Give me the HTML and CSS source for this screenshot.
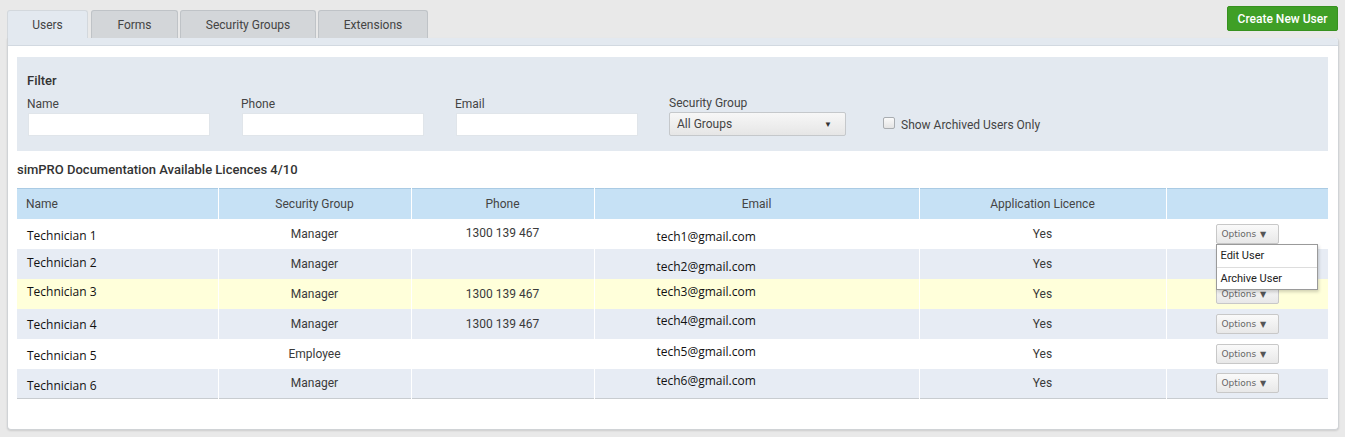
FILE: index.html
```html
<!DOCTYPE html>
<html>
<head>
<meta charset="utf-8">
<link rel="stylesheet" href="styles.css">
</head>
<body>
<div class="top">
  <div class="tabs">
    <div class="tab active">Users</div>
    <div class="tab t-forms">Forms</div>
    <div class="tab t-sec">Security Groups</div>
    <div class="tab t-ext">Extensions</div>
  </div>
  <button class="btn-create">Create New User</button>
</div>
<div class="panel">
  <div class="panel-strip"></div>
  <div class="panel-body">
    <div class="filter">
      <div class="filter-title">Filter</div>
      <div class="filter-row">
        <div class="field"><label>Name</label><div class="input"></div></div>
        <div class="field"><label>Phone</label><div class="input"></div></div>
        <div class="field"><label>Email</label><div class="input"></div></div>
        <div class="field f-sel"><label>Security Group</label><div class="select"><span>All Groups</span><span class="arr">▼</span></div></div>
        <div class="check"><span class="box"></span><span>Show Archived Users Only</span></div>
      </div>
    </div>
    <div class="heading">simPRO Documentation Available Licences 4/10</div>
    <table class="users">
      <colgroup>
        <col class="c1"><col class="c2"><col class="c3"><col class="c4"><col class="c5"><col>
      </colgroup>
      <thead>
        <tr><th class="left">Name</th><th>Security Group</th><th>Phone</th><th>Email</th><th>Application Licence</th><th></th></tr>
      </thead>
      <tbody>
        <tr><td class="name lo">Technician 1</td><td>Manager</td><td class="hi1">1300 139 467</td><td class="email lo2">tech1@gmail.com</td><td>Yes</td><td class="opt"><span class="options">Options <i>▼</i></span>
          <div class="menu"><div class="mi">Edit User</div><div class="mi">Archive User</div></div></td></tr>
        <tr class="alt"><td class="name hi1">Technician 2</td><td>Manager</td><td></td><td class="email lo2">tech2@gmail.com</td><td>Yes</td><td class="opt"></td></tr>
        <tr class="hover"><td class="name hi">Technician 3</td><td>Manager</td><td>1300 139 467</td><td class="email hi">tech3@gmail.com</td><td>Yes</td><td class="opt"><span class="options">Options <i>▼</i></span></td></tr>
        <tr class="alt"><td class="name lo1">Technician 4</td><td>Manager</td><td>1300 139 467</td><td class="email hi2">tech4@gmail.com</td><td>Yes</td><td class="opt"><span class="options">Options <i>▼</i></span></td></tr>
        <tr><td class="name lo">Technician 5</td><td>Employee</td><td></td><td class="email hi">tech5@gmail.com</td><td>Yes</td><td class="opt"><span class="options">Options <i>▼</i></span></td></tr>
        <tr class="alt"><td class="name lo">Technician 6</td><td>Manager</td><td></td><td class="email hi2">tech6@gmail.com</td><td>Yes</td><td class="opt"><span class="options">Options <i>▼</i></span></td></tr>
      </tbody>
    </table>
  </div>
</div>
</body>
</html>
```

FILE: styles.css
```css
* { box-sizing: border-box; }
body {
  margin: 0;
  background: #e9e9e9;
  font-family: Roboto, "Liberation Sans", sans-serif;
  color: #333;
  width: 1345px;
  height: 437px;
  overflow: hidden;
}
.top {
  display: flex;
  justify-content: space-between;
  align-items: flex-start;
  height: 38px;
  padding: 0 7px 0 7px;
}
.tabs {
  display: flex;
  gap: 2px;
  margin-top: 10px;
}
.tab {
  height: 28px;
  line-height: 29px;
  font-size: 12px;
  color: #444;
  text-align: center;
  background: #d3d6d9;
  border: 1px solid #bfc3c7;
  border-bottom: none;
  border-radius: 3px 3px 0 0;
}
.tab.active { width: 81px; background: #e3e9f0; border-color: #d3d8dd; margin-right: 1px; }
.t-forms { width: 87px; }
.t-sec { width: 136px; }
.t-ext { width: 110px; }
.btn-create {
  margin-top: 6px;
  width: 111px;
  height: 25px;
  background: #3f9f26;
  border: 1px solid #37911f;
  border-radius: 2px;
  color: #fff;
  font-family: Roboto, sans-serif;
  font-size: 12px;
  font-weight: 500;
  padding: 0;
}
.panel {
  margin: 0 6px 0 7px;
  height: 392px;
  background: #fff;
  border: 1px solid #d0d3d6;
  border-top: none;
  border-radius: 0 4px 4px 4px;
  box-shadow: 0 1px 2px rgba(0,0,0,0.12);
}
.panel-strip {
  height: 8px;
  background: #e3e9f0;
  border-bottom: 1px solid #d2d9e1;
  border-radius: 0 4px 0 0;
}
.panel-body {
  padding: 11px 10px 0 9px;
}
.filter {
  background: #e3e9f0;
  height: 94px;
  padding: 16px 10px 0 10px;
}
.filter-title {
  font-size: 13px;
  font-weight: 500;
  color: #333;
  line-height: 16px;
}
.filter-row {
  display: flex;
  align-items: flex-end;
  margin-top: 7px;
}
.field {
  display: flex;
  flex-direction: column;
  width: 183px;
  margin-right: 31px;
}
.field label {
  font-size: 12px;
  color: #444;
  line-height: 14px;
  margin-bottom: 2px;
}
.input {
  height: 23px;
  background: #fff;
  border: 1px solid #e0e5ea;
  margin-left: 1px;
}
.f-sel { width: 177px; margin-right: 37px; }
.select {
  height: 24px;
  border: 1px solid #c5c8cb;
  border-radius: 2px;
  background: linear-gradient(#f7f7f7, #e6e6e6);
  display: flex;
  justify-content: space-between;
  align-items: center;
  padding: 0 13px 0 7px;
  font-size: 12px;
  color: #444;
}
.select .arr { font-size: 8px; color: #333; }
.check {
  display: flex;
  align-items: center;
  gap: 6px;
  font-size: 12px;
  color: #444;
  height: 23px;
}
.check .box {
  width: 12px;
  height: 12px;
  border: 1px solid #a9adb1;
  border-radius: 2px;
  background: linear-gradient(#fafafa, #e4e4e4);
  margin-top: -3px;
}
.check span:last-child { margin-top: 1px; }
.heading {
  font-size: 13px;
  font-weight: 500;
  color: #333;
  height: 37px;
  line-height: 15px;
  padding-top: 11px;
}
.users {
  width: 1311px;
  border-collapse: collapse;
  table-layout: fixed;
  border-top: 1px solid #aacbe4;
  border-bottom: 1px solid #c8ccd0;
}
.c1 { width: 201px; }
.c2 { width: 193px; }
.c3 { width: 183px; }
.c4 { width: 325px; }
.c5 { width: 247px; }
.users th {
  height: 30px;
  background: #c6e1f5;
  font-size: 12px;
  font-weight: 400;
  color: #444;
  text-align: center;
  border-left: 1px solid #fff;
  padding: 0;
}
.users th:first-child { border-left: none; }
.users th.left { text-align: left; padding-left: 9px; }
.users td {
  height: 30px;
  font-size: 12px;
  color: #3a3a3a;
  text-align: center;
  border-left: 1px solid #fff;
  padding: 0;
  vertical-align: middle;
}
.users td:first-child { border-left: none; }
.users td.name {
  text-align: left;
  padding-left: 10px;
  font-family: "Open Sans", sans-serif;
  font-size: 12px;
  color: #111;
}
.users td.email {
  font-family: "Open Sans", sans-serif;
  font-size: 12px;
  color: #111;
  text-align: left;
  padding-left: 62px;
}
.users td.lo { padding-top: 4px; }
.users td.lo1 { padding-top: 2px; }
.users td.lo2 { padding-top: 6px; }
.users td.hi { padding-bottom: 4px; }
.users td.hi1 { padding-bottom: 2px; }
.users td.hi2 { padding-bottom: 6px; }
tr.alt td { background: #e7ecf4; }
tr.hover td { background: #ffffda; }
.users td.opt { position: relative; text-align: left; padding: 0 0 0 49px; }
.options {
  display: inline-block;
  width: 63px;
  height: 20px;
  line-height: 18px;
  border: 1px solid #c8c8c8;
  border-radius: 2px;
  background: linear-gradient(#fafafa, #e8e8e8);
  font-family: "DejaVu Sans", Verdana, sans-serif;
  font-size: 9px;
  color: #666;
  padding-left: 5px;
  vertical-align: middle;
}
.options i { font-style: normal; font-size: 8px; color: #555; margin-left: 1px; }
.menu {
  position: absolute;
  left: 49px;
  top: 25px;
  width: 102px;
  background: #fff;
  border: 1px solid #9a9a9a;
  box-shadow: 1px 2px 3px rgba(0,0,0,0.18);
  z-index: 5;
  font-family: Roboto, sans-serif;
  font-size: 11px;
  color: #222;
}
.mi {
  height: 22px;
  line-height: 21px;
  padding-left: 4px;
}
.mi + .mi { border-top: 1px solid #ddd; }
```
